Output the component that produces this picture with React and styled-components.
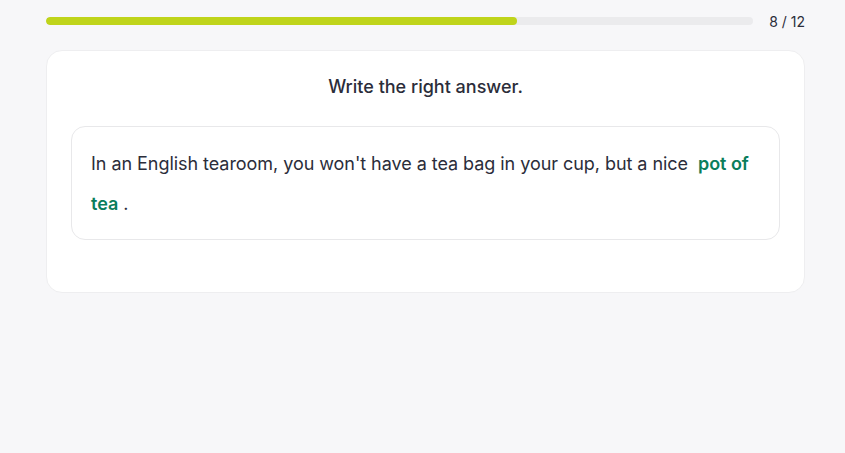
import styled, { createGlobalStyle } from "styled-components";

const GlobalStyle = createGlobalStyle`
	body {
		margin: 0;
		background: #f7f7f9;
		font-family: Inter, "Noto Sans", sans-serif;
		color: #2b2d3a;
	}
`;

const Page = styled.div`
	min-height: 453px;
	padding: 16px 40px 0 46px;
	box-sizing: border-box;
`;

const ProgressRow = styled.div`
	display: flex;
	align-items: center;
	gap: 16px;
	height: 10px;
	margin-bottom: 24px;
`;

const Track = styled.div`
	flex: 1;
	height: 8px;
	border-radius: 4px;
	background: #ebebed;
	overflow: hidden;
`;

const Fill = styled.div`
	height: 100%;
	border-radius: 4px;
	background: #bfd41b;
`;

const Counter = styled.span`
	font-size: 14px;
	color: #2b2d3a;
	white-space: nowrap;
`;

const Card = styled.div`
	background: #fff;
	border: 1px solid #eeeef0;
	border-radius: 16px;
	padding: 24px 24px 52px;
`;

const Title = styled.div`
	font-size: 18px;
	font-weight: 500;
	text-align: center;
	line-height: 24px;
	margin-bottom: 27px;
	color: #2b2d3a;
`;

const Sentence = styled.div`
	border: 1px solid #e8e8ea;
	border-radius: 14px;
	padding: 17px 19px 15px;
	font-size: 18px;
	letter-spacing: -0.05px;
	line-height: 40px;
	color: #2b2d3a;
`;

const Answer = styled.span`
	color: #0a7d5c;
	font-weight: 600;
	padding-left: 5px;
`;

const App = () => {
	const current = 8;
	const total = 12;
	return (
		<Page>
			<GlobalStyle />
			<ProgressRow>
				<Track>
					<Fill style={{ width: `${(current / total) * 100}%` }} />
				</Track>
				<Counter>
					{current} / {total}
				</Counter>
			</ProgressRow>
			<Card>
				<Title>Write the right answer.</Title>
				<Sentence>
					In an English tearoom, you won't have a tea bag in your cup, but a
					nice <Answer>pot of tea</Answer> .
				</Sentence>
			</Card>
		</Page>
	);
};

export default App;
